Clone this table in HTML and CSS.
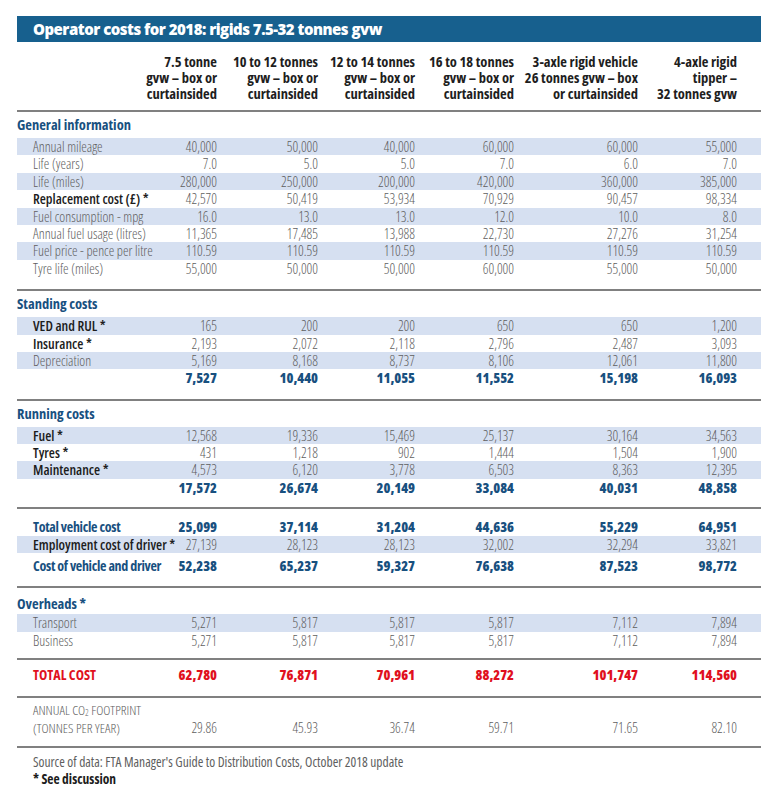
FILE: index.html
```html
<!DOCTYPE html>
<html lang="en">
<head>
<meta charset="utf-8">
<title>Operator costs for 2018</title>
<link rel="stylesheet" href="styles.css">
</head>
<body>
<div class="sheet">
  <div class="titlebar">Operator costs for 2018: rigids 7.5-32 tonnes gvw</div>

  <div class="row head">
    <div></div>
    <div><span>7.5 tonne</span><span>gvw – box or</span><span>curtainsided</span></div>
    <div><span>10 to 12 tonnes</span><span>gvw – box or</span><span>curtainsided</span></div>
    <div><span>12 to 14 tonnes</span><span>gvw – box or</span><span>curtainsided</span></div>
    <div><span>16 to 18 tonnes</span><span>gvw – box or</span><span>curtainsided</span></div>
    <div><span>3-axle rigid vehicle</span><span>26 tonnes gvw – box</span><span>or curtainsided</span></div>
    <div><span>4-axle rigid</span><span>tipper –</span><span>32 tonnes gvw</span></div>
  </div>

  <div class="rule"></div>
  <div class="sec-title">General information</div>
  <div class="row band"><div>Annual mileage</div><div>40,000</div><div>50,000</div><div>40,000</div><div>60,000</div><div>60,000</div><div>55,000</div></div>
  <div class="row"><div>Life (years)</div><div>7.0</div><div>5.0</div><div>5.0</div><div>7.0</div><div>6.0</div><div>7.0</div></div>
  <div class="row band"><div>Life (miles)</div><div>280,000</div><div>250,000</div><div>200,000</div><div>420,000</div><div>360,000</div><div>385,000</div></div>
  <div class="row"><div class="lb">Replacement cost (£) *</div><div>42,570</div><div>50,419</div><div>53,934</div><div>70,929</div><div>90,457</div><div>98,334</div></div>
  <div class="row band"><div>Fuel consumption - mpg</div><div>16.0</div><div>13.0</div><div>13.0</div><div>12.0</div><div>10.0</div><div>8.0</div></div>
  <div class="row"><div>Annual fuel usage (litres)</div><div>11,365</div><div>17,485</div><div>13,988</div><div>22,730</div><div>27,276</div><div>31,254</div></div>
  <div class="row band"><div>Fuel price - pence per litre</div><div>110.59</div><div>110.59</div><div>110.59</div><div>110.59</div><div>110.59</div><div>110.59</div></div>
  <div class="row"><div>Tyre life (miles)</div><div>55,000</div><div>50,000</div><div>50,000</div><div>60,000</div><div>55,000</div><div>50,000</div></div>

  <div class="rule gap"></div>
  <div class="sec-title">Standing costs</div>
  <div class="row band"><div class="lb">VED and RUL *</div><div>165</div><div>200</div><div>200</div><div>650</div><div>650</div><div>1,200</div></div>
  <div class="row"><div class="lb">Insurance *</div><div>2,193</div><div>2,072</div><div>2,118</div><div>2,796</div><div>2,487</div><div>3,093</div></div>
  <div class="row band"><div>Depreciation</div><div>5,169</div><div>8,168</div><div>8,737</div><div>8,106</div><div>12,061</div><div>11,800</div></div>
  <div class="row total"><div></div><div>7,527</div><div>10,440</div><div>11,055</div><div>11,552</div><div>15,198</div><div>16,093</div></div>

  <div class="rule gap"></div>
  <div class="sec-title">Running costs</div>
  <div class="row band"><div class="lb">Fuel *</div><div>12,568</div><div>19,336</div><div>15,469</div><div>25,137</div><div>30,164</div><div>34,563</div></div>
  <div class="row"><div class="lb">Tyres *</div><div>431</div><div>1,218</div><div>902</div><div>1,444</div><div>1,504</div><div>1,900</div></div>
  <div class="row band"><div class="lb">Maintenance *</div><div>4,573</div><div>6,120</div><div>3,778</div><div>6,503</div><div>8,363</div><div>12,395</div></div>
  <div class="row total"><div></div><div>17,572</div><div>26,674</div><div>20,149</div><div>33,084</div><div>40,031</div><div>48,858</div></div>

  <div class="rule gap-md"></div>
  <div class="row total first"><div>Total vehicle cost</div><div>25,099</div><div>37,114</div><div>31,204</div><div>44,636</div><div>55,229</div><div>64,951</div></div>
  <div class="row band"><div class="lb">Employment cost of driver *</div><div>27,139</div><div>28,123</div><div>28,123</div><div>32,002</div><div>32,294</div><div>33,821</div></div>
  <div class="row total after"><div>Cost of vehicle and driver</div><div>52,238</div><div>65,237</div><div>59,327</div><div>76,638</div><div>87,523</div><div>98,772</div></div>

  <div class="rule gap"></div>
  <div class="sec-title roomy">Overheads *</div>
  <div class="row band"><div>Transport</div><div>5,271</div><div>5,817</div><div>5,817</div><div>5,817</div><div>7,112</div><div>7,894</div></div>
  <div class="row"><div>Business</div><div>5,271</div><div>5,817</div><div>5,817</div><div>5,817</div><div>7,112</div><div>7,894</div></div>

  <div class="rule gap-sm"></div>
  <div class="row grand"><div>TOTAL COST</div><div>62,780</div><div>76,871</div><div>70,961</div><div>88,272</div><div>101,747</div><div>114,560</div></div>

  <div class="rule gap"></div>
  <div class="row co2"><div><span>ANNUAL CO<span class="sub">2</span> FOOTPRINT</span><span>(TONNES PER YEAR)</span></div><div>29.86</div><div>45.93</div><div>36.74</div><div>59.71</div><div>71.65</div><div>82.10</div></div>

  <div class="rule gap-sm"></div>
  <div class="notes">
    <div class="src">Source of data: FTA Manager's Guide to Distribution Costs, October 2018 update</div>
    <div class="see">* See discussion</div>
  </div>
</div>
</body>
</html>
```

FILE: styles.css
```css
html, body {
  margin: 0;
  padding: 0;
  background: #ffffff;
}

body {
  font-family: "Open Sans", "DejaVu Sans", sans-serif;
  font-stretch: 75%;
  color: #5e5e5e;
}

.sheet {
  width: 744px;
  margin-left: 17px;
  padding-top: 16px;
}

.titlebar {
  height: 26px;
  line-height: 26px;
  background: #17608e;
  color: #ffffff;
  font-family: "Open Sans", sans-serif;
  font-stretch: 90%;
  font-weight: 800;
  font-size: 15px;
  letter-spacing: -0.5px;
  padding-left: 16px;
}

.row {
  display: grid;
  grid-template-columns: 104px 80px 101px 97px 99px 124px 99px;
  padding: 0 24px 0 16px;
  height: 17.4px;
  line-height: 17.4px;
  font-size: 14px;
  font-weight: 300;
  white-space: nowrap;
}

.row > div {
  text-align: right;
}

.row > div:first-child {
  text-align: left;
}

.row.band {
  background: #d6e0f1;
}

.row .lb {
  font-weight: 600;
  color: #1c1c1c;
}

.row.head {
  height: auto;
  margin-top: 12px;
  line-height: 16px;
  font-size: 14.5px;
  font-weight: 700;
  color: #1e1e1e;
  padding-bottom: 8px;
}

.row.head span {
  display: block;
}

.rule {
  height: 2px;
  background: #808080;
}

.rule.gap {
  margin-top: 12px;
}

.rule.gap-md {
  margin-top: 11px;
}

.rule.gap-sm {
  margin-top: 9px;
}

.sec-title {
  height: 26px;
  padding-top: 2px;
  box-sizing: border-box;
  line-height: 22px;
  font-size: 14.5px;
  font-weight: 700;
  color: #18507f;
}

.sec-title.roomy {
  padding-top: 6px;
  line-height: 20px;
}

.row.total {
  font-weight: 800;
  color: #18507f;
}

.row.total > div:first-child {
  font-weight: 700;
  letter-spacing: -0.3px;
}

.row.total.first {
  margin-top: 9px;
}

.row.total.after {
  margin-top: 4px;
}

.row.grand {
  margin-top: 6px;
  font-weight: 800;
  color: #e0101e;
}

.row.grand > div:first-child {
  font-weight: 700;
}

.row.co2 {
  height: 36px;
  margin-top: 3px;
  line-height: 18px;
  align-items: end;
}

.row.co2 > div:first-child {
  font-size: 13.5px;
}

.row.co2 > div:first-child > span {
  display: block;
}

.row.co2 .sub {
  display: inline;
  font-size: 9px;
  line-height: 0;
  vertical-align: -1px;
}

.notes {
  padding: 6px 0 0 16px;
  font-size: 13.5px;
  line-height: 17px;
}

.notes .see {
  font-weight: 700;
  color: #1c1c1c;
}
```
